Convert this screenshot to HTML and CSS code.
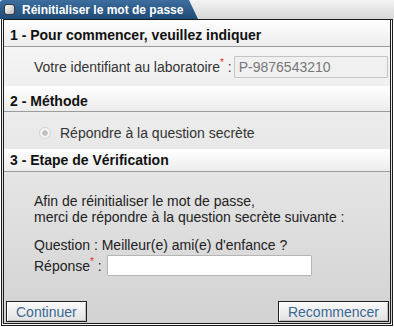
FILE: index.html
```html
<!DOCTYPE html>
<html lang="fr">
<head>
    <meta charset="UTF-8">
    <meta name="viewport" content="width=device-width, initial-scale=1.0">
    <title>Réinitialiser le mot de passe</title>
    <link rel="stylesheet" href="styles.css">
</head>
<body>
    <div class="window">
        <div class="titlebar">
            <div class="tab"><span class="tab-icon"></span>Réinitialiser le mot de passe</div>
        </div>
        <div class="frame">
            <div class="section-head first">1 - Pour commencer, veuillez indiquer</div>
            <div class="field-row">
                <label for="ident">Votre identifiant au laboratoire<sup class="req">*</sup> :</label>
                <input class="text-input ident" id="ident" type="text" value="P-9876543210" disabled>
            </div>

            <div class="section-head lowered">2 - Méthode</div>
            <div class="radio-row">
                <span class="radio"></span>
                <span>Répondre à la question secrète</span>
            </div>

            <div class="section-head">3 - Etape de Vérification</div>
            <div class="verify">
                <p class="intro">Afin de réinitialiser le mot de passe,<br>merci de répondre à la question secrète suivante :</p>
                <p class="question">Question : Meilleur(e) ami(e) d'enfance ?</p>
                <div class="answer-row">
                    <label for="answer">Réponse<sup class="req">*</sup> :</label>
                    <input class="text-input answer" id="answer" type="text">
                </div>
            </div>

            <div class="actions">
                <button class="button">Continuer</button>
                <button class="button">Recommencer</button>
            </div>
        </div>
    </div>
</body>
</html>
```

FILE: styles.css
```css
body {
    margin: 0;
    background: #fff;
}
.window {
    width: 394px;
    height: 327px;
    display: flex;
    flex-direction: column;
    font-family: "Liberation Sans", Arial, sans-serif;
    font-size: 14px;
    color: #222;
}
.titlebar {
    height: 19px;
    flex: none;
    display: flex;
    background: linear-gradient(#f3f3f3, #d8d8d8);
}
.tab {
    width: 198px;
    height: 19px;
    display: flex;
    align-items: center;
    gap: 7px;
    padding-left: 4px;
    box-sizing: border-box;
    background: linear-gradient(#3d6e9f, #1e4a76);
    color: #fff;
    font-size: 12px;
    font-weight: bold;
    border-top-left-radius: 3px;
    clip-path: polygon(0 0, 189px 0, 198px 100%, 0 100%);
}
.tab-icon {
    width: 9px;
    height: 9px;
    border: 1px solid #3a3a3a;
    border-radius: 3px;
    background: linear-gradient(135deg, #ffffff, #b9b9b9);
}
.frame {
    flex: 1;
    display: flex;
    flex-direction: column;
    margin: 0 1px 1px;
    border: 3px double #1c1c1c;
    border-top: 1px solid #1c1c1c;
    background: linear-gradient(#f8f8f8, #d2d2d2);
}
.section-head {
    height: 22px;
    line-height: 22px;
    padding-left: 6px;
    font-weight: bold;
    color: #111;
    background: linear-gradient(#ffffff, #ececec);
    border-bottom: 1px solid #9c9c9c;
}
.section-head.first {
    padding-top: 4px;
}
/* text sits a bit lower in this header */
.section-head.lowered {
    height: 21px;
    padding-top: 4px;
}
.field-row {
    display: flex;
    align-items: center;
    padding: 9px 0 8px 30px;
    color: #333;
    white-space: nowrap;
}
.field-row label {
    margin-right: 2px;
}
.req {
    color: #e0301e;
    font-size: 10px;
    vertical-align: 6px;
    line-height: 0;
}
.text-input {
    flex: none;
    box-sizing: border-box;
    font-family: inherit;
    font-size: 14px;
    border: 1px solid #b5b5b5;
    border-radius: 1px;
    padding: 0 4px;
    background: #fff;
}
.ident {
    width: 154px;
    height: 22px;
    background: #f0f0f0;
    color: #777;
    border-color: #c4c4c4;
}
.radio-row {
    display: flex;
    align-items: center;
    gap: 9px;
    height: 33px;
    padding: 4px 0 0 35px;
    color: #333;
}
.radio {
    width: 12px;
    height: 12px;
    box-sizing: border-box;
    border-radius: 50%;
    border: 1px solid #d2d2d2;
    background: radial-gradient(circle, #c0c0c0 0 2.5px, #f4f4f4 3px 100%);
}
.verify {
    flex: 1;
    padding: 21px 0 0 30px;
    white-space: nowrap;
}
.verify p {
    margin: 0;
    line-height: 16px;
}
.question {
    margin-top: 12px !important;
}
.answer-row {
    display: flex;
    align-items: center;
    margin-top: 2px;
}
.answer-row label {
    margin-right: 5px;
}
.answer {
    width: 205px;
    height: 21px;
}
.actions {
    display: flex;
    justify-content: space-between;
    padding: 0 1px 1px 2px;
}
.button {
    height: 21px;
    padding: 0 9px;
    font-family: inherit;
    font-size: 14px;
    color: #3a6894;
    background: linear-gradient(#fafafa, #e2e2e2);
    border: 1px solid #1e1e1e;
    border-radius: 0;
    box-shadow: inset 1px 1px 0 #fff, inset -1px -1px 0 #bdbdbd;
    cursor: pointer;
}
.button:hover {
    background: linear-gradient(#ffffff, #ebebeb);
}
```
